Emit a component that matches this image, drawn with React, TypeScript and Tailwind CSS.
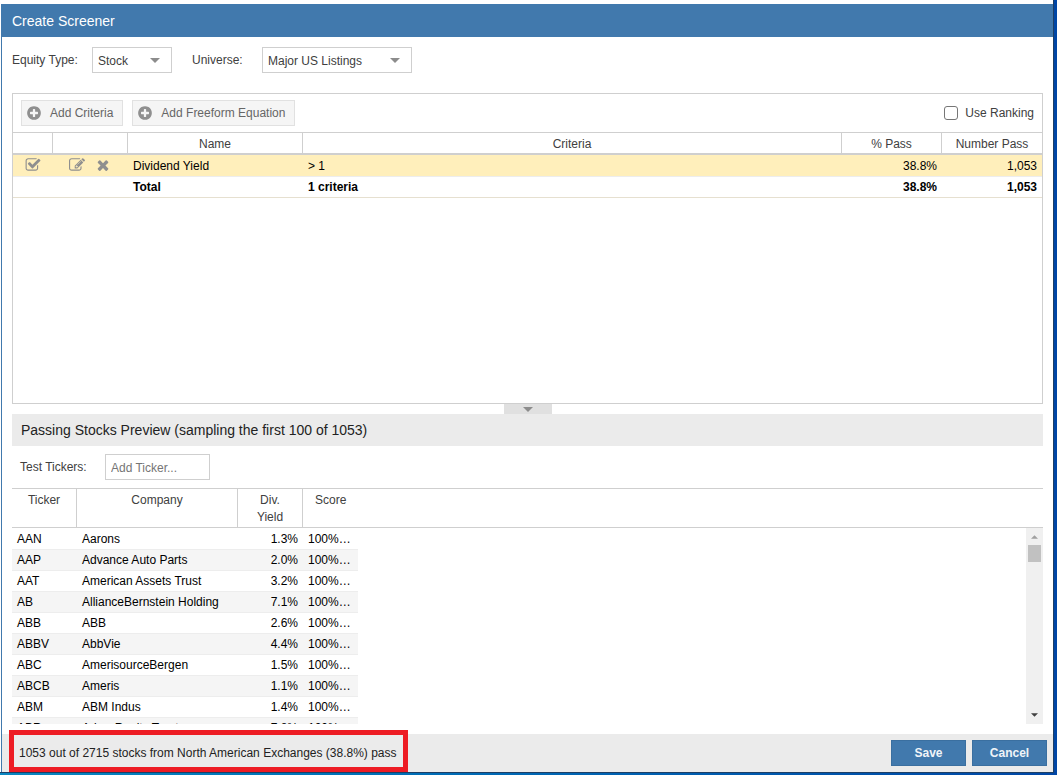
import { useState } from "react";

const stocks = [
  { ticker: "AAN", company: "Aarons", yield: "1.3%" },
  { ticker: "AAP", company: "Advance Auto Parts", yield: "2.0%" },
  { ticker: "AAT", company: "American Assets Trust", yield: "3.2%" },
  { ticker: "AB", company: "AllianceBernstein Holding", yield: "7.1%" },
  { ticker: "ABB", company: "ABB", yield: "2.6%" },
  { ticker: "ABBV", company: "AbbVie", yield: "4.4%" },
  { ticker: "ABC", company: "AmerisourceBergen", yield: "1.5%" },
  { ticker: "ABCB", company: "Ameris", yield: "1.1%" },
  { ticker: "ABM", company: "ABM Indus", yield: "1.4%" },
  { ticker: "ABR", company: "Arbor Realty Trust", yield: "7.8%" },
];

const icons = {
  plus: "M1344 960v-128q0-26-19-45t-45-19h-256v-256q0-26-19-45t-45-19h-128q-26 0-45 19t-19 45v256h-256q-26 0-45 19t-19 45v128q0 26 19 45t45 19h256v256q0 26 19 45t45 19h128q26 0 45-19t19-45v-256h256q26 0 45-19t19-45zm320-64q0 209-103 385.5t-279.5 279.5-385.5 103-385.5-103-279.5-279.5-103-385.5 103-385.5 279.5-279.5 385.5-103 385.5 103 279.5 279.5 103 385.5z",
  check:
    "M1472 930v318q0 119-84.5 203.5t-203.5 84.5h-832q-119 0-203.5-84.5t-84.5-203.5v-832q0-119 84.5-203.5t203.5-84.5h832q63 0 117 25 15 7 18 23 3 17-9 29l-49 49q-10 10-23 10-3 0-9-2-23-6-45-6h-832q-66 0-113 47t-47 113v832q0 66 47 113t113 47h832q66 0 113-47t47-113v-254q0-13 9-22l64-64q10-10 23-10 6 0 12 3 20 8 20 29zm231-489l-814 814q-24 24-57 24t-57-24l-430-430q-24-24-24-57t24-57l110-110q24-24 57-24t57 24l263 263 647-647q24-24 57-24t57 24l110 110q24 24 24 57t-24 57z",
  edit: "M888 1184l116-116-152-152-116 116v56h96v96h56zm440-720q-16-16-33 1l-350 350q-17 17-1 33t33-1l350-350q17-17 1-33zm80 594v190q0 119-84.5 203.5t-203.5 84.5h-832q-119 0-203.5-84.5t-84.5-203.5v-832q0-119 84.5-203.5t203.5-84.5h832q63 0 117 25 15 7 18 23 3 17-9 29l-49 49q-14 14-32 8-23-6-45-6h-832q-66 0-113 47t-47 113v832q0 66 47 113t113 47h832q66 0 113-47t47-113v-126q0-13 9-22l64-64q15-15 35-7t20 29zm-96-738l288 288-672 672h-288v-288zm444 132l-92 92-288-288 92-92q28-28 68-28t68 28l152 152q28 28 28 68t-28 68z",
  times:
    "M1490 1322q0 40-28 68l-136 136q-28 28-68 28t-68-28l-294-294-294 294q-28 28-68 28t-68-28l-136-136q-28-28-28-68t28-68l294-294-294-294q-28-28-28-68t28-68l136-136q28-28 68-28t68 28l294 294 294-294q28-28 68-28t68 28l136 136q28 28 28 68t-28 68l-294 294 294 294q28 28 28 68z",
};

function Icon({ name }: { name: keyof typeof icons }) {
  return (
    <svg viewBox="0 0 1792 1792" className="block size-4" fill="#8f8f8f" aria-hidden="true">
      <path d={icons[name]} />
    </svg>
  );
}

function Caret({ className }: { className: string }) {
  return (
    <svg viewBox="0 0 10 5" className={className} aria-hidden="true">
      <path d="M0 0h10L5 5z" fill="currentColor" />
    </svg>
  );
}

function Dropdown({ id, options, className }: { id: string; options: string[]; className: string }) {
  return (
    <div className={`relative ${className}`}>
      <select
        id={id}
        className="h-[26px] w-full appearance-none border border-[#cfcfcf] bg-white pl-[5px] pt-px text-[#404040] outline-none"
      >
        {options.map((o) => (
          <option key={o}>{o}</option>
        ))}
      </select>
      <Caret className="pointer-events-none absolute right-3 top-[11px] h-[5px] w-[10px] text-[#8c8c8c]" />
    </div>
  );
}

function ToolButton({ children }: { children: string }) {
  return (
    <button
      type="button"
      className="flex h-[26px] items-center gap-2 border border-[#e1e1e1] bg-[#f5f5f5] pl-1 pr-[9px] text-[#666]"
    >
      <Icon name="plus" />
      {children}
    </button>
  );
}

function CriteriaPanel() {
  const [ranking, setRanking] = useState(false);
  const [enabled, setEnabled] = useState(true);

  return (
    <section className="h-[311px] shrink-0 border border-[#cfcfcf]">
      <div className="flex h-[38px] items-center gap-[9px] px-2">
        <ToolButton>Add Criteria</ToolButton>
        <ToolButton>Add Freeform Equation</ToolButton>
        <label className="ml-auto flex items-center gap-[7px] text-[#404040]">
          <input
            type="checkbox"
            checked={ranking}
            onChange={(e) => setRanking(e.target.checked)}
            className="size-[14px] appearance-none rounded-[3px] border border-[#767676] bg-white checked:bg-[#4179ad]"
          />
          Use Ranking
        </label>
      </div>
      <table className="w-full table-fixed border-separate border-spacing-0">
        <colgroup>
          <col className="w-[39px]" />
          <col className="w-[75px]" />
          <col className="w-[175px]" />
          <col />
          <col className="w-[100px]" />
          <col className="w-[101px]" />
        </colgroup>
        <thead>
          <tr className="h-[23px] text-[#404040] *:border-b-2 *:border-l *:border-t *:border-[#cfcfcf] *:p-0 *:pt-px *:font-normal">
            <th className="border-l-0!" aria-label="Enabled" />
            <th aria-label="Actions" />
            <th>Name</th>
            <th>Criteria</th>
            <th>% Pass</th>
            <th>Number Pass</th>
          </tr>
        </thead>
        <tbody>
          <tr className="h-[22px] bg-[#ffefbb] *:border-b *:border-[#ededed] *:px-[5px] *:py-0">
            <td>
              <label className="flex justify-center pb-px">
                <input
                  type="checkbox"
                  aria-label="Enable Dividend Yield"
                  checked={enabled}
                  onChange={(e) => setEnabled(e.target.checked)}
                  className="sr-only"
                />
                <Icon name="check" />
              </label>
            </td>
            <td>
              <div className="flex items-center gap-[10px] pb-px pl-3">
                <button type="button" aria-label="Edit">
                  <Icon name="edit" />
                </button>
                <button type="button" aria-label="Remove">
                  <Icon name="times" />
                </button>
              </div>
            </td>
            <td className="pl-[6px]!">Dividend Yield</td>
            <td className="pl-[6px]!">&gt; 1</td>
            <td className="pr-1! text-right">38.8%</td>
            <td className="text-right">1,053</td>
          </tr>
          <tr className="h-[21px] font-bold *:border-b *:border-[#e6e0d0] *:px-[5px] *:py-0">
            <td />
            <td />
            <td className="pl-[6px]!">Total</td>
            <td className="pl-[6px]!">1 criteria</td>
            <td className="pr-1! text-right">38.8%</td>
            <td className="text-right">1,053</td>
          </tr>
        </tbody>
      </table>
    </section>
  );
}

function StockColumns() {
  return (
    <colgroup>
      <col className="w-[64px]" />
      <col className="w-[161px]" />
      <col className="w-[65px]" />
      <col className="w-[56px]" />
    </colgroup>
  );
}

function Preview() {
  return (
    <section className="flex min-h-0 flex-1 flex-col">
      <h2 className="flex h-8 shrink-0 items-center bg-[#ebebeb] pl-[9px] text-[14px] text-[#222]">
        Passing Stocks Preview (sampling the first 100 of 1053)
      </h2>
      <div className="flex h-[42px] shrink-0 items-center pl-2">
        <label htmlFor="test-ticker" className="w-[85px] text-[#404040]">
          Test Tickers:
        </label>
        <input
          id="test-ticker"
          type="text"
          placeholder="Add Ticker..."
          className="h-[26px] w-[105px] border border-[#cfcfcf] px-[5px] pt-px outline-none placeholder:text-[#757575]"
        />
      </div>

      <div className="shrink-0 border-y border-[#cfcfcf]">
        <table className="w-[346px] table-fixed border-separate border-spacing-0">
          <StockColumns />
          <thead>
            <tr className="h-[38px] leading-[17px] text-[#404040] *:border-l *:border-[#cfcfcf] *:px-3 *:pb-0 *:pt-[3px] *:align-top *:font-normal">
              <th className="border-l-0!">Ticker</th>
              <th>Company</th>
              <th>Div. Yield</th>
              <th>Score</th>
            </tr>
          </thead>
        </table>
      </div>

      <div className="flex min-h-0 flex-1">
        <div className="flex-1 overflow-hidden pt-px">
          <table className="w-[346px] table-fixed border-separate border-spacing-0">
            <StockColumns />
            <tbody>
              {stocks.map((s) => (
                <tr
                  key={s.ticker}
                  className="h-[21px] even:bg-[#f5f5f5] *:whitespace-nowrap *:border-b *:border-[#ededed] *:px-[5px] *:py-0"
                >
                  <td>{s.ticker}</td>
                  <td className="pl-[6px]!">{s.company}</td>
                  <td className="pr-1! text-right">{s.yield}</td>
                  <td className="pl-[6px]!">100%…</td>
                </tr>
              ))}
            </tbody>
          </table>
        </div>
        <div className="flex w-[17px] flex-col items-center bg-[#f0f0f0] py-[7px]" aria-hidden="true">
          <Caret className="h-[4px] w-[7px] rotate-180 text-[#a0a0a0]" />
          <div className="mt-[6px] h-[17px] w-[13px] bg-[#c1c1c1]" />
          <Caret className="mt-auto h-[4px] w-[7px] text-[#404040]" />
        </div>
      </div>
    </section>
  );
}

function Footer() {
  const button = "h-[26px] w-[75px] border border-[#3a6fa0] bg-[#4179ad] font-bold text-[#f0f4f8]";

  return (
    <footer className="relative flex h-[38px] shrink-0 items-center gap-[6px] bg-[#ebebeb] pl-[17px] pr-[6px]">
      <p className="mr-auto text-[#222]">
        1053 out of 2715 stocks from North American Exchanges (38.8%) pass
      </p>
      <button type="button" className={button}>
        Save
      </button>
      <button type="button" className={button}>
        Cancel
      </button>
      <div className="pointer-events-none absolute -top-1 bottom-0 left-[7px] w-[399px] border-[5px] border-[#ed1c24]" />
    </footer>
  );
}

export default function App() {
  return (
    <div className="h-screen bg-linear-to-r from-[#0a86c0] to-[#0046a5] pb-[2px] pr-[3px] font-['Liberation_Sans',Arial,sans-serif] text-[12px] leading-4 text-black">
      <div className="flex h-full flex-col border-b border-r border-[#1d3f66] bg-white pl-px pt-1">
        <header className="flex h-[33px] shrink-0 items-center bg-[#4179ad] pl-[11px]">
          <h1 className="text-[14px] text-white">Create Screener</h1>
        </header>
        <main className="flex min-h-0 flex-1 flex-col border-l border-l-[#4179ad]">
          <div className="flex min-h-0 flex-1 flex-col px-[10px] pb-[10px] pt-[10px]">
            <div className="mb-5 flex shrink-0 items-center text-[#404040]">
              <label htmlFor="equity-type" className="w-[80px]">
                Equity Type:
              </label>
              <Dropdown id="equity-type" className="w-[80px]" options={["Stock", "ETF", "Fund"]} />
              <label htmlFor="universe" className="ml-5 w-[70px]">
                Universe:
              </label>
              <Dropdown id="universe" className="w-[150px]" options={["Major US Listings", "All Listings"]} />
            </div>
            <CriteriaPanel />
            <button
              type="button"
              aria-label="Collapse criteria"
              className="flex h-[10px] w-12 shrink-0 items-center justify-center self-center bg-[#e0e0e0]"
            >
              <Caret className="h-[5px] w-[10px] text-[#8c8c8c]" />
            </button>
            <Preview />
          </div>
          <Footer />
        </main>
      </div>
    </div>
  );
}
